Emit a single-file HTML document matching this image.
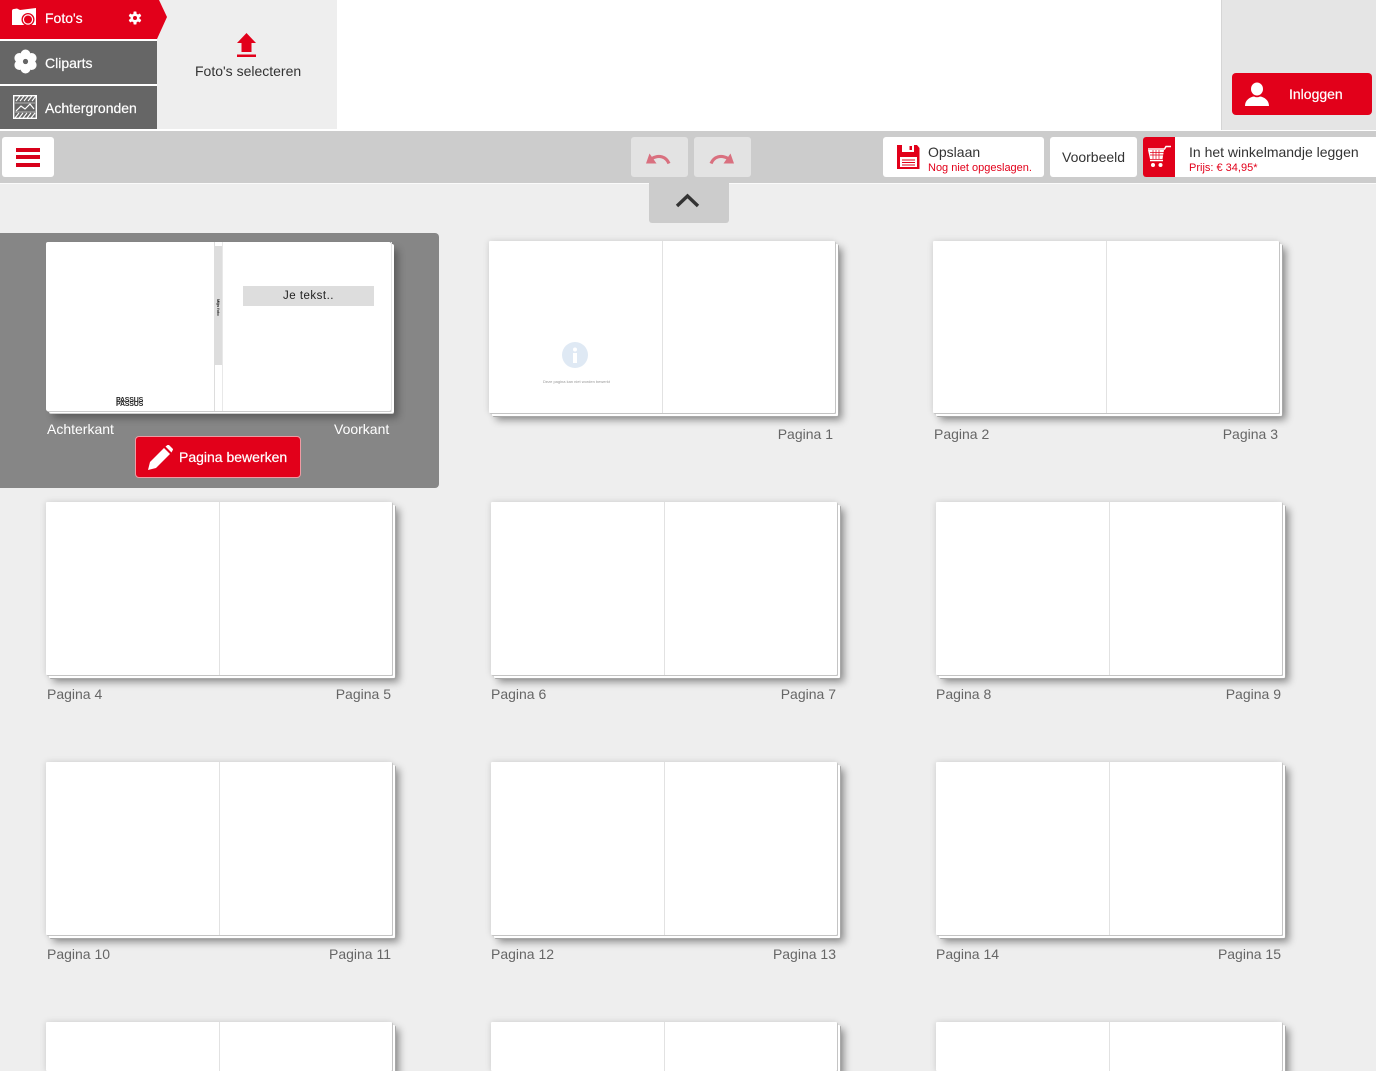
<!DOCTYPE html>
<html lang="nl"><head><meta charset="utf-8"><title>Fotoboek</title>
<style>
html{margin:0;padding:0;width:1376px;height:1071px;overflow:hidden}
body{margin:0;padding:0;width:1376px;height:1071px;overflow:hidden;position:relative;background:#eee;font-family:"Liberation Sans",Arial,sans-serif;font-size:14px;color:#333}
#w{position:absolute;left:0;top:0;width:1376px;height:1071px;overflow:hidden;background:#eee}
.a{position:absolute}
.t{position:absolute;white-space:nowrap;line-height:16px}
.tab{position:absolute;left:0;width:157px;height:43px;background:#666}
.btn{position:absolute;background:#fff;border-radius:3px}
.s{position:absolute;width:346px;height:173px;background:#fff;border-radius:1px;box-shadow:1px 1px 0 #c4c4c4,3px 3px 0 #fff,4px 4px 0 #a8a8a8,0 0 7px rgba(0,0,0,.14),7px 7px 8px rgba(0,0,0,.42)}
.s:after{content:"";position:absolute;left:173px;top:0;width:1px;height:100%;background:#e2e2e2}
.l{position:absolute;white-space:nowrap;line-height:16px;color:#666;font-size:14px}
svg{position:absolute;display:block}
</style></head><body><div id="w">

<!-- top header -->
<div class="a" style="left:0;top:0;width:1376px;height:131px;background:#fff"></div>
<div class="a" style="left:157px;top:0;width:180px;height:129px;background:#eee"></div>
<div class="a" style="left:1221px;top:0;width:155px;height:130px;background:#e5e5e5;border-left:1px solid #d5d5d5;box-sizing:border-box"></div>

<!-- tabs -->
<svg style="left:0;top:0" width="168" height="40"><path d="M0 0H159L167 17 157 39H0Z" fill="#e2001a"/></svg>
<svg style="left:11px;top:7px" width="26" height="20" viewBox="0 0 26 20"><path d="M1 4Q1 2 3 2L6 1.500 9 3 25 1V18H1Z" fill="#fff"/><circle cx="17" cy="12.500" r="6.500" fill="#e2001a"/><circle cx="17" cy="12.500" r="5.200" fill="#fff"/><circle cx="17" cy="12.500" r="4" fill="#e2001a"/></svg>
<div class="t" style="left:45px;top:10px;color:#fff;-webkit-text-stroke:.2px #fff">Foto's</div>
<svg style="left:128px;top:11px" width="14" height="14" viewBox="0 0 14 14"><g fill="#fff"><circle cx="7" cy="7" r="4.600"/><rect x="5.500" y="0.500" width="3" height="13" rx=".6"/><rect x="5.500" y="0.500" width="3" height="13" rx=".6" transform="rotate(60 7 7)"/><rect x="5.500" y="0.500" width="3" height="13" rx=".6" transform="rotate(120 7 7)"/></g><circle cx="7" cy="7" r="2" fill="#e2001a"/></svg>

<div class="tab" style="top:41px"></div>
<svg style="left:13px;top:49px" width="25" height="25" viewBox="0 0 25 25"><g fill="#fff"><circle cx="12.500" cy="5.500" r="5"/><circle cx="12.500" cy="19.500" r="5"/><circle cx="6.400" cy="9" r="5"/><circle cx="18.600" cy="9" r="5"/><circle cx="6.400" cy="16" r="5"/><circle cx="18.600" cy="16" r="5"/></g><circle cx="12.500" cy="12.500" r="2.600" fill="#666"/></svg>
<div class="t" style="left:45px;top:55px;color:#fff;-webkit-text-stroke:.2px #fff">Cliparts</div>

<div class="tab" style="top:86px"></div>
<svg style="left:13px;top:95px" width="24" height="24" viewBox="0 0 24 24"><rect x=".7" y=".7" width="22.600" height="22.600" fill="#666" stroke="#fff" stroke-width="1.400"/><g stroke="#fff" stroke-width="1.100"><path d="M3 6L7 1M7 6L11 1M11 6L15 1M15 6L19 1M19 6L23 1M2 23L6 18M6 23L10 18M10 23L14 18M14 23L18 18M18 23L22 18"/></g><path d="M3 16L8 11 12 14 17 9 21 14" fill="none" stroke="#fff" stroke-width="1.200"/><path d="M2 8H22M2 17H22" stroke="#fff" stroke-width=".5"/></svg>
<div class="t" style="left:45px;top:100px;color:#fff;-webkit-text-stroke:.2px #fff">Achtergronden</div>

<!-- upload -->
<svg style="left:236px;top:32px" width="21" height="26" viewBox="0 0 21 26"><path d="M10.500 1L20 11H15.500V20H5.500V11H1Z" fill="#e2001a"/><rect x="1" y="22.500" width="19" height="2.500" fill="#e2001a"/></svg>
<div class="t" style="left:195px;top:63px;color:#333">Foto's selecteren</div>

<!-- login -->
<div class="a" style="left:1232px;top:73px;width:140px;height:42px;background:#e2001a;border-radius:4px"></div>
<svg style="left:1244px;top:81px" width="26" height="26" viewBox="0 0 26 26"><ellipse cx="13" cy="8" rx="6" ry="6.500" fill="#fff"/><path d="M1 25C1 19 6 16 10 15.500Q13 17 16 15.500C20 16 25 19 25 25Z" fill="#fff"/></svg>
<div class="t" style="left:1289px;top:86px;color:#fff;-webkit-text-stroke:.2px #fff">Inloggen</div>

<!-- toolbar -->
<div class="a" style="left:0;top:131px;width:1376px;height:52px;background:#ccc"></div>
<div class="a" style="left:0;top:183px;width:1376px;height:1px;background:#fafafa"></div>
<div class="btn" style="left:2px;top:137px;width:52px;height:40px"></div>
<div class="a" style="left:16px;top:148px;width:24px;height:4px;background:#d8001a"></div>
<div class="a" style="left:16px;top:155px;width:24px;height:4px;background:#d8001a"></div>
<div class="a" style="left:16px;top:163px;width:24px;height:4px;background:#d8001a"></div>

<div class="btn" style="left:631px;top:137px;width:57px;height:40px;background:#e3e3e3"></div>
<div class="btn" style="left:694px;top:137px;width:57px;height:40px;background:#e3e3e3"></div>
<svg style="left:645px;top:150px" width="27" height="15" viewBox="0 0 27 15"><path d="M24 13.500C21 6.500 14 4.500 7 8.500" fill="none" stroke="#d9707f" stroke-width="3.200"/><path d="M1 13.500H11.500L4.500 3.500Z" fill="#d9707f"/></svg>
<svg style="left:708px;top:150px" width="27" height="15" viewBox="0 0 27 15"><path d="M3 13.500C6 6.500 13 4.500 20 8.500" fill="none" stroke="#d9707f" stroke-width="3.200"/><path d="M26 13.500H15.500L22.500 3.500Z" fill="#d9707f"/></svg>

<div class="a" style="left:649px;top:183px;width:80px;height:40px;background:#ccc;border-radius:0 0 3px 3px"></div>
<svg style="left:675px;top:192px" width="26" height="18" viewBox="0 0 26 18"><path d="M2 14L12.500 4 23 14" fill="none" stroke="#333" stroke-width="3.400"/></svg>

<div class="btn" style="left:883px;top:137px;width:161px;height:40px"></div>
<svg style="left:897px;top:145px" width="23" height="24" viewBox="0 0 23 24"><path d="M0 0H22.500V24H0Z" fill="#e2001a"/><path d="M22.500 0V3L20 0Z" fill="#fff"/><rect x="5" y="0" width="12" height="7" fill="#fff"/><rect x="12.500" y="1" width="2.500" height="4" fill="#e2001a"/><rect x="3" y="12" width="17" height="10" fill="#fff"/><path d="M5 15H18M5 17.500H18M5 20H18" stroke="#e2001a" stroke-width="1"/></svg>
<div class="t" style="left:928px;top:144px;color:#333">Opslaan</div>
<div class="t" style="left:928px;top:161px;color:#e2001a;font-size:11px;line-height:14px">Nog niet opgeslagen.</div>

<div class="btn" style="left:1050px;top:137px;width:87px;height:40px"></div>
<div class="t" style="left:1062px;top:149px;color:#333">Voorbeeld</div>

<div class="btn" style="left:1143px;top:137px;width:233px;height:40px;border-radius:3px 0 0 3px"></div>
<div class="a" style="left:1143px;top:137px;width:32px;height:40px;background:#e2001a;border-radius:3px 0 0 3px"></div>
<svg style="left:1146px;top:145px" width="26" height="24" viewBox="0 0 26 24"><path d="M2 4H18.500L20 1.500H25" fill="none" stroke="#fff" stroke-width="1.500"/><path d="M2 5H18L16.500 14H4Z" fill="#fff"/><path d="M4 7.500H18M4 10H17.500M7 5V14M10 5V14M13 5V14" stroke="#e2001a" stroke-width=".7"/><path d="M4 15.500H17" stroke="#fff" stroke-width="1.500"/><circle cx="7" cy="20" r="2" fill="#fff"/><circle cx="14.500" cy="20" r="2" fill="#fff"/></svg>
<div class="t" style="left:1189px;top:144px;color:#333">In het winkelmandje leggen</div>
<div class="t" style="left:1189px;top:161px;color:#e2001a;font-size:11px;line-height:14px">Prijs: € 34,95*</div>

<!-- selected cover -->
<div class="a" style="left:0;top:233px;width:439px;height:255px;background:#868686;border-radius:0 4px 4px 0"></div>
<div class="a" style="left:46px;top:242px;width:345px;height:169px;background:#fff;border-radius:2px;box-shadow:1px 1px 0 #ccc,3px 2px 0 #fff,3px 3px 0 #ccc,7px 7px 8px rgba(0,0,0,.32)"></div>
<div class="a" style="left:214px;top:242px;width:1px;height:169px;background:#ddd"></div>
<div class="a" style="left:222px;top:242px;width:1px;height:169px;background:#e8e8e8"></div>
<div class="a" style="left:215px;top:246px;width:7px;height:119px;background:#ddd"></div>
<div class="a" style="left:391px;top:242px;width:1px;height:169px;background:#e4e4e4"></div>
<div class="t" style="left:211px;top:303px;width:14px;height:6px;font-size:4px;font-weight:bold;line-height:6px;color:#222;transform:rotate(90deg);text-align:center">Mijn foto</div>
<div class="a" style="left:243px;top:286px;width:131px;height:20px;background:#ddd"></div>
<div class="t" style="left:243px;top:288px;width:131px;text-align:center;font-size:11.500px;letter-spacing:.5px;line-height:16px;color:#222">Je tekst..</div>
<div class="t" style="left:116px;top:399px;width:28px;font-size:7px;line-height:4px;color:#222;font-weight:bold;letter-spacing:-.2px">PASSUS<br>PASSUS</div>
<div class="t" style="left:47px;top:421px;color:#fff">Achterkant</div>
<div class="t" style="left:334px;top:421px;color:#fff">Voorkant</div>
<div class="a" style="left:135px;top:436px;width:166px;height:42px;box-sizing:border-box;background:#e2001a;border:1px solid #f09aa3;border-radius:4px"></div>
<svg style="left:147px;top:445px" width="26" height="26" viewBox="0 0 26 26"><path d="M1 25L3 17 17 3 23 9 9 23Z" fill="#fff"/><path d="M18.500 1.500L20.500 0Q21.500-.5 22.500.5L25.500 3.500Q26.500 4.500 25.500 5.500L24.500 7.500Z" fill="#fff"/></svg>
<div class="t" style="left:179px;top:449px;color:#fff;-webkit-text-stroke:.2px #fff">Pagina bewerken</div>

<!-- row 1 -->
<div class="s" style="left:489px;top:241px;height:172px"></div>
<svg style="left:562px;top:342px" width="26" height="26" viewBox="0 0 26 26"><circle cx="13" cy="13" r="13" fill="#dfe9f4"/><circle cx="13" cy="7.500" r="2" fill="#fff"/><rect x="11" y="11" width="4" height="10" fill="#fff"/></svg>
<div class="t" style="left:543px;top:378px;font-size:4px;line-height:8px;color:#999">Deze pagina kan niet worden bewerkt</div>
<div class="l" style="left:733px;width:100px;top:426px;text-align:right">Pagina 1</div>

<div class="s" style="left:933px;top:241px;height:172px"></div>
<div class="l" style="left:934px;top:426px">Pagina 2</div>
<div class="l" style="left:1178px;width:100px;top:426px;text-align:right">Pagina 3</div>

<!-- row 2 -->
<div class="s" style="left:46px;top:502px"></div>
<div class="l" style="left:47px;top:686px">Pagina 4</div>
<div class="l" style="left:291px;width:100px;top:686px;text-align:right">Pagina 5</div>
<div class="s" style="left:491px;top:502px"></div>
<div class="l" style="left:491px;top:686px">Pagina 6</div>
<div class="l" style="left:736px;width:100px;top:686px;text-align:right">Pagina 7</div>
<div class="s" style="left:936px;top:502px"></div>
<div class="l" style="left:936px;top:686px">Pagina 8</div>
<div class="l" style="left:1181px;width:100px;top:686px;text-align:right">Pagina 9</div>

<!-- row 3 -->
<div class="s" style="left:46px;top:762px"></div>
<div class="l" style="left:47px;top:946px">Pagina 10</div>
<div class="l" style="left:291px;width:100px;top:946px;text-align:right">Pagina 11</div>
<div class="s" style="left:491px;top:762px"></div>
<div class="l" style="left:491px;top:946px">Pagina 12</div>
<div class="l" style="left:736px;width:100px;top:946px;text-align:right">Pagina 13</div>
<div class="s" style="left:936px;top:762px"></div>
<div class="l" style="left:936px;top:946px">Pagina 14</div>
<div class="l" style="left:1181px;width:100px;top:946px;text-align:right">Pagina 15</div>

<!-- row 4 -->
<div class="s" style="left:46px;top:1022px;height:49px"></div>
<div class="s" style="left:491px;top:1022px;height:49px"></div>
<div class="s" style="left:936px;top:1022px;height:49px"></div>

</div></body></html>
